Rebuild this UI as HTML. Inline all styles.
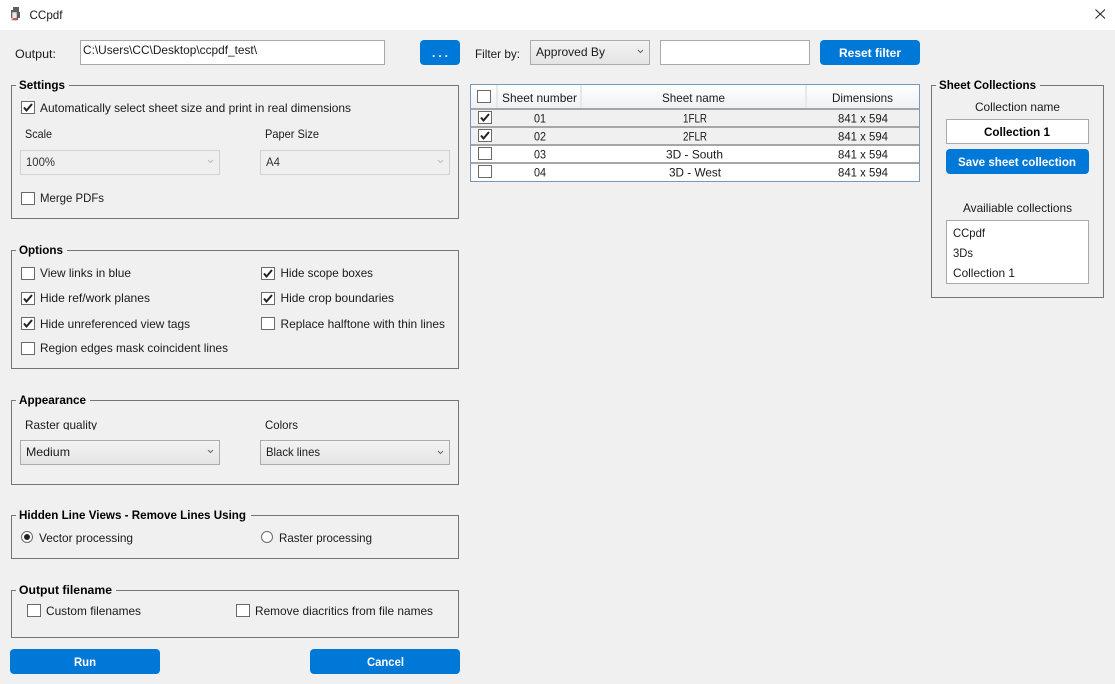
<!DOCTYPE html>
<html><head><meta charset="utf-8"><title>CCpdf</title>
<style>
html,body{margin:0;padding:0;width:1115px;height:684px;overflow:hidden;background:#f0f0f0}
svg{display:block}
text{font-family:"Liberation Sans",sans-serif;font-size:12px;fill:#1a1a1a}
.b{font-weight:bold;fill:#000}
.w{font-weight:bold;fill:#fff}
.g{fill:none;stroke:#757575;stroke-width:1}
.box{fill:#fff;stroke:#a9a9a9;stroke-width:1}
.cb{fill:#fff;stroke:#6a6a6a;stroke-width:1}
.ck{fill:none;stroke:#222;stroke-width:2}
.chev{fill:none;stroke:#666;stroke-width:1}
.dis{fill:#efefef;stroke:#d2d2d2;stroke-width:1}
.cmb{fill:url(#cg);stroke:#acacac;stroke-width:1}
.btn{fill:#0078d7}
.sep{fill:#f0f0f0}
.rl{fill:#a6a6a6}
</style></head><body>
<svg width="1115" height="684" viewBox="0 0 1115 684" xmlns="http://www.w3.org/2000/svg">
<defs>
<linearGradient id="cg" x1="0" y1="0" x2="0" y2="1"><stop offset="0" stop-color="#f3f3f3"/><stop offset="1" stop-color="#e4e4e4"/></linearGradient>
<linearGradient id="hg" x1="0" y1="0" x2="0" y2="1"><stop offset="0" stop-color="#ffffff"/><stop offset="1" stop-color="#eef0f3"/></linearGradient>
<clipPath id="c1"><rect x="20" y="415" width="100" height="15"/></clipPath>
<clipPath id="c2"><rect x="38" y="315" width="160" height="15"/></clipPath>
<symbol id="c" overflow="visible"><rect class="cb" x="0.5" y="0.5" width="13" height="12"/></symbol>
<symbol id="k" overflow="visible"><rect class="cb" x="0.5" y="0.5" width="13" height="12"/><path class="ck" d="M3 6.500L5.500 9.500L11 3"/></symbol>
</defs>
<rect width="1115" height="684" fill="#f0f0f0"/>
<rect width="1115" height="30" fill="#fff"/>

<!-- title bar -->
<path d="M13 7h6v5h1v6h-2v2h-6v-2h-1v-8h2z" fill="#5f5f5f"/>
<rect x="12" y="12" width="5" height="8" fill="#e8e8e8" stroke="#666" stroke-width=".6"/>
<rect x="13" y="18" width="4" height="2" fill="#d9534f"/>
<text x="29.500" y="19" textLength="33" lengthAdjust="spacingAndGlyphs">CCpdf</text>
<path d="M1095.500 9.500L1105 18.500M1105 9.500L1095.500 18.500" stroke="#222" stroke-width="1" fill="none"/>

<!-- output row -->
<text x="15" y="58" textLength="41" lengthAdjust="spacingAndGlyphs">Output:</text>
<rect class="box" x="80.500" y="40.500" width="304" height="24"/>
<text x="83" y="54" textLength="174" lengthAdjust="spacingAndGlyphs">C:\Users\CC\Desktop\ccpdf_test\</text>
<rect class="btn" x="420" y="40" width="40" height="25" rx="4"/>
<text class="w" x="432" y="57" textLength="16" lengthAdjust="spacing">...</text>

<!-- filter row -->
<text x="475" y="58" textLength="45" lengthAdjust="spacingAndGlyphs">Filter by:</text>
<rect class="cmb" x="530.500" y="40.500" width="119" height="24"/>
<text x="536" y="56" textLength="69" lengthAdjust="spacingAndGlyphs">Approved By</text>
<path class="chev" d="M638 50l2.500 2.500L643 50"/>
<rect class="box" x="660.500" y="40.500" width="149" height="24"/>
<rect class="btn" x="820" y="40" width="100" height="25" rx="4"/>
<text class="w" x="839" y="57" textLength="62" lengthAdjust="spacingAndGlyphs">Reset filter</text>

<!-- Settings -->
<rect class="g" x="11.500" y="85.500" width="447" height="133"/>
<rect class="sep" x="16" y="80" width="53" height="10"/>
<text class="b" x="19" y="89" textLength="46" lengthAdjust="spacingAndGlyphs">Settings</text>
<use href="#k" x="21" y="101"/>
<text x="40" y="112" textLength="311" lengthAdjust="spacingAndGlyphs">Automatically select sheet size and print in real dimensions</text>
<text x="25" y="138" textLength="27" lengthAdjust="spacingAndGlyphs">Scale</text>
<text x="265" y="138" textLength="54" lengthAdjust="spacingAndGlyphs">Paper Size</text>
<rect class="dis" x="20.500" y="150.500" width="199" height="24"/>
<text x="26" y="166" textLength="29" lengthAdjust="spacingAndGlyphs" style="fill:#333">100%</text>
<path d="M208 160l2.500 2.500L213 160" fill="none" stroke="#bbb"/>
<rect class="dis" x="260.500" y="150.500" width="189" height="24"/>
<text x="266" y="166" textLength="14" lengthAdjust="spacingAndGlyphs" style="fill:#333">A4</text>
<path d="M438 160l2.500 2.500L443 160" fill="none" stroke="#bbb"/>
<use href="#c" x="21" y="192"/>
<text x="40" y="202" textLength="64" lengthAdjust="spacingAndGlyphs">Merge PDFs</text>

<!-- Options -->
<rect class="g" x="11.500" y="250.500" width="447" height="118"/>
<rect class="sep" x="16" y="245" width="51" height="10"/>
<text class="b" x="19" y="254" textLength="44" lengthAdjust="spacingAndGlyphs">Options</text>
<use href="#c" x="21" y="267"/>
<text x="40" y="277" textLength="91" lengthAdjust="spacingAndGlyphs">View links in blue</text>
<use href="#k" x="21" y="292"/>
<text x="40" y="302" textLength="110" lengthAdjust="spacingAndGlyphs">Hide ref/work planes</text>
<use href="#k" x="21" y="317"/>
<g clip-path="url(#c2)"><text x="40" y="328" textLength="150" lengthAdjust="spacingAndGlyphs">Hide unreferenced view tags</text></g>
<use href="#c" x="21" y="342"/>
<text x="40" y="352" textLength="188" lengthAdjust="spacingAndGlyphs">Region edges mask coincident lines</text>
<use href="#k" x="261" y="267"/>
<text x="280.500" y="277" textLength="92.500" lengthAdjust="spacingAndGlyphs">Hide scope boxes</text>
<use href="#k" x="261" y="292"/>
<text x="280.500" y="302" textLength="113.500" lengthAdjust="spacingAndGlyphs">Hide crop boundaries</text>
<use href="#c" x="261" y="317"/>
<text x="280.500" y="328" textLength="164.500" lengthAdjust="spacingAndGlyphs">Replace halftone with thin lines</text>

<!-- Appearance -->
<rect class="g" x="11.500" y="400.500" width="447" height="84"/>
<rect class="sep" x="16" y="395" width="74" height="10"/>
<text class="b" x="19" y="404" textLength="67" lengthAdjust="spacingAndGlyphs">Appearance</text>
<g clip-path="url(#c1)"><text x="25" y="429" textLength="72" lengthAdjust="spacingAndGlyphs">Raster quality</text></g>
<text x="265" y="429" textLength="33" lengthAdjust="spacingAndGlyphs">Colors</text>
<rect class="cmb" x="20.500" y="440.500" width="199" height="24"/>
<text x="26" y="456" textLength="44" lengthAdjust="spacingAndGlyphs">Medium</text>
<path class="chev" d="M208 450l2.500 2.500L213 450"/>
<rect class="cmb" x="260.500" y="440.500" width="189" height="24"/>
<text x="266" y="456" textLength="54" lengthAdjust="spacingAndGlyphs">Black lines</text>
<path class="chev" d="M438 451l2.500 2.500L443 451"/>

<!-- Hidden line -->
<rect class="g" x="11.500" y="515.500" width="447" height="43"/>
<rect class="sep" x="16" y="510" width="235" height="10"/>
<text class="b" x="19" y="519" textLength="227" lengthAdjust="spacingAndGlyphs">Hidden Line Views - Remove Lines Using</text>
<circle cx="27" cy="537" r="5.500" fill="#fff" stroke="#6a6a6a"/>
<circle cx="27" cy="537" r="3" fill="#222"/>
<text x="39" y="542" textLength="94" lengthAdjust="spacingAndGlyphs">Vector processing</text>
<circle cx="267" cy="537" r="5.500" fill="#fff" stroke="#6a6a6a"/>
<text x="279" y="542" textLength="93" lengthAdjust="spacingAndGlyphs">Raster processing</text>

<!-- Output filename -->
<rect class="g" x="11.500" y="590.500" width="447" height="47"/>
<rect class="sep" x="16" y="585" width="100" height="10"/>
<text class="b" x="19" y="594" textLength="93" lengthAdjust="spacingAndGlyphs">Output filename</text>
<use href="#c" x="27" y="604"/>
<text x="46" y="615" textLength="95" lengthAdjust="spacingAndGlyphs">Custom filenames</text>
<use href="#c" x="236" y="604"/>
<text x="255" y="615" textLength="178" lengthAdjust="spacingAndGlyphs">Remove diacritics from file names</text>

<!-- Bottom buttons -->
<rect class="btn" x="10" y="649" width="150" height="25" rx="4"/>
<text class="w" x="74" y="666" textLength="22" lengthAdjust="spacingAndGlyphs">Run</text>
<rect class="btn" x="310" y="649" width="150" height="25" rx="4"/>
<text class="w" x="367" y="666" textLength="37" lengthAdjust="spacingAndGlyphs">Cancel</text>

<!-- Table -->
<rect x="470.500" y="84.500" width="449" height="97" fill="#fff" stroke="#7a97bd"/>
<rect x="471" y="85" width="448" height="24" fill="url(#hg)"/>
<rect x="496" y="85" width="2" height="24" fill="#e6e8ea"/>
<rect x="580" y="85" width="2" height="24" fill="#e6e8ea"/>
<rect x="805" y="85" width="2" height="24" fill="#e6e8ea"/>
<rect x="471" y="110" width="448" height="16" fill="#f0f0f0"/>
<rect x="471" y="128" width="448" height="16" fill="#f0f0f0"/>
<rect class="rl" x="471" y="108" width="448" height="2"/>
<rect class="rl" x="471" y="126" width="448" height="2"/>
<rect class="rl" x="471" y="144" width="448" height="2"/>
<rect class="rl" x="471" y="162" width="448" height="2"/>
<use href="#c" x="477" y="90"/>
<text x="502" y="102" textLength="75" lengthAdjust="spacingAndGlyphs">Sheet number</text>
<text x="662" y="102" textLength="63" lengthAdjust="spacingAndGlyphs">Sheet name</text>
<text x="832" y="102" textLength="61" lengthAdjust="spacingAndGlyphs">Dimensions</text>
<use href="#k" x="478" y="111"/>
<text x="534" y="122.500" textLength="12" lengthAdjust="spacingAndGlyphs">01</text>
<text x="683" y="122.500" textLength="24" lengthAdjust="spacingAndGlyphs">1FLR</text>
<text x="838" y="122.500" textLength="50" lengthAdjust="spacingAndGlyphs">841 x 594</text>
<use href="#k" x="478" y="129"/>
<text x="534" y="140.500" textLength="12" lengthAdjust="spacingAndGlyphs">02</text>
<text x="683" y="140.500" textLength="24" lengthAdjust="spacingAndGlyphs">2FLR</text>
<text x="838" y="140.500" textLength="50" lengthAdjust="spacingAndGlyphs">841 x 594</text>
<use href="#c" x="478" y="147"/>
<text x="534" y="158.500" textLength="12" lengthAdjust="spacingAndGlyphs">03</text>
<text x="666" y="158.500" textLength="57" lengthAdjust="spacingAndGlyphs">3D - South</text>
<text x="838" y="158.500" textLength="50" lengthAdjust="spacingAndGlyphs">841 x 594</text>
<use href="#c" x="478" y="165"/>
<text x="534" y="176.500" textLength="12" lengthAdjust="spacingAndGlyphs">04</text>
<text x="669" y="176.500" textLength="52" lengthAdjust="spacingAndGlyphs">3D - West</text>
<text x="838" y="176.500" textLength="50" lengthAdjust="spacingAndGlyphs">841 x 594</text>

<!-- Sheet collections -->
<rect class="g" x="931.500" y="85.500" width="172" height="212"/>
<rect class="sep" x="936" y="80" width="104" height="10"/>
<text class="b" x="939" y="89" textLength="97" lengthAdjust="spacingAndGlyphs">Sheet Collections</text>
<text x="975" y="111" textLength="85" lengthAdjust="spacingAndGlyphs">Collection name</text>
<rect class="box" x="946.500" y="119.500" width="142" height="24"/>
<text class="b" x="984" y="136" textLength="66" lengthAdjust="spacingAndGlyphs">Collection 1</text>
<rect class="btn" x="946" y="149" width="143" height="25" rx="4"/>
<text class="w" x="958" y="166" textLength="118" lengthAdjust="spacingAndGlyphs">Save sheet collection</text>
<text x="963" y="212" textLength="109" lengthAdjust="spacingAndGlyphs">Availiable collections</text>
<rect class="box" x="946.500" y="220.500" width="142" height="63"/>
<text x="953" y="237" textLength="32" lengthAdjust="spacingAndGlyphs">CCpdf</text>
<text x="953" y="257" textLength="20" lengthAdjust="spacingAndGlyphs">3Ds</text>
<text x="953" y="277" textLength="62" lengthAdjust="spacingAndGlyphs">Collection 1</text>
</svg>
</body></html>
